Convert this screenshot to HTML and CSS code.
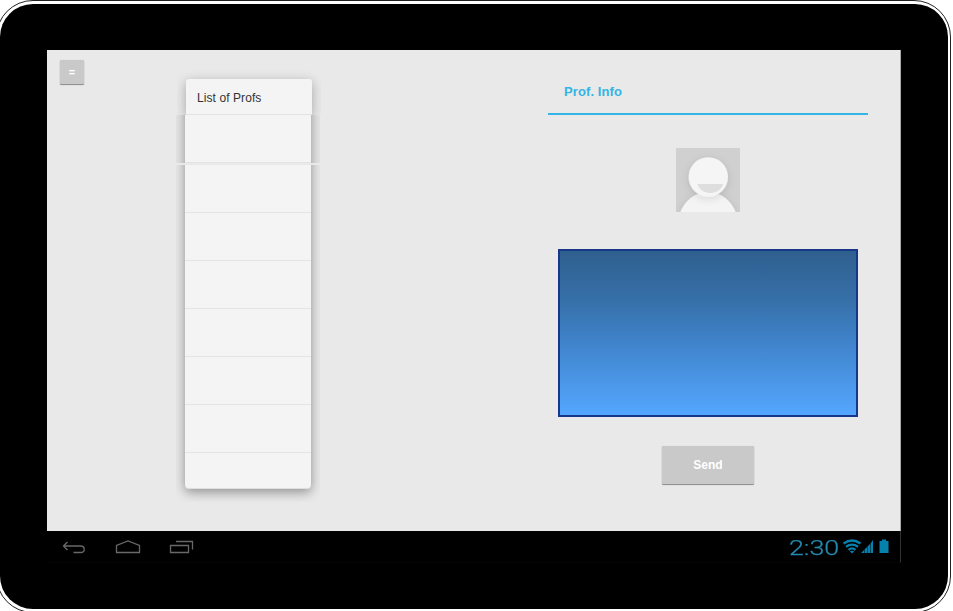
FILE: index.html
```html
<!DOCTYPE html>
<html lang="en">
<head>
<meta charset="utf-8">
<title>List of Profs</title>
<link rel="stylesheet" href="styles.css">
</head>
<body>
<div class="tablet">
  <div class="bezel">
    <main class="screen">
      <div class="menu-col"><button class="btn menu">=</button></div>
      <section class="list">
        <div class="card head">List of Profs</div>
        <div class="card first"><div class="row"></div></div>
        <div class="card rest">
          <div class="row"></div><div class="row"></div><div class="row"></div>
          <div class="row"></div><div class="row"></div><div class="row"></div>
        </div>
      </section>
      <section class="info">
        <h1>Prof. Info</h1>
        <svg class="avatar" width="64" height="64" viewBox="0 0 64 64">
          <defs>
            <filter id="soft" x="-30%" y="-30%" width="160%" height="160%"><feDropShadow dx="0" dy="2" stdDeviation="4" flood-opacity=".12"/></filter>
          </defs>
          <rect width="64" height="64" fill="#d0d0d0"/>
          <path d="M4 65C9 52 19 44 32 44s23 8 28 21z" fill="#f4f4f4" filter="url(#soft)"/>
          <circle cx="32.300" cy="29" r="19.700" fill="#f5f5f5" filter="url(#soft)"/>
          <path d="M21.500 36h25.500c-1 5-6.500 9-12.700 9s-11.800-4-12.800-9z" fill="#dedede"/>
        </svg>
        <div class="panel"></div>
        <button class="btn send">Send</button>
      </section>
    </main>
    <footer class="navbar">
      <svg class="nav" width="140" height="18" viewBox="0 0 140 18" fill="none" stroke="#686868" stroke-width="1.300">
        <path d="M4.500 3L.5 7l4 4M.5 7h17c5 0 5 6.500 0 6.500h-7"/>
        <path d="M53.500 13.500V6.500L65 2l11.500 4.500v7z"/>
        <path d="M107.500 6.500h18v7h-18zM113 2.500h16.500v8"/>
      </svg>
      <span class="clock"><span>2:30</span></span>
      <svg class="status" width="48" height="16" viewBox="0 0 48 16">
        <g fill="none" stroke="#0681ad" stroke-width="2.300">
          <path d="M.5 4.500Q9 -1.500 17.500 4.500M3 7.800Q9 3.500 15 7.800M5.500 10.800Q9 8 12.500 10.800"/>
        </g>
        <g fill="#0681ad">
          <path d="M6.800 12.300Q9 11 11.200 12.300L9 14.500z"/>
          <path d="M18 14l3-3v3zM21.500 10.500l2.500-2.500v6h-2.500zM24.500 7.500l2.500-2.500v9h-2.500zM27.500 4.500l2.500-3.500v13h-2.500z"/>
          <path d="M36.500 2h2.500V.500h4V2h2.500v12h-9z"/>
        </g>
      </svg>
    </footer>
  </div>
</div>
</body>
</html>
```
FILE: styles.css
```css
* { box-sizing: border-box; }
html, body { height: 100%; }
body {
  margin: 0;
  overflow: hidden;
  background: #fff;
  font-family: "Liberation Sans", Arial, sans-serif;
}
.tablet {
  width: 955px;
  height: 613px;
  margin-left: -4px;
  padding: 3px 2px 2px 3px;
  border: 1px solid #222;
  border-radius: 37px;
}
.bezel {
  width: 948px;
  height: 605px;
  padding: 46px 47px 46px;
  border-radius: 33px;
  background: #000;
}
.screen {
  display: flex;
  width: 854px;
  height: 481px;
  background: #e9e9e9;
  border-right: 1px solid #ababab;
}
.menu-col { width: 138px; padding: 10px 0 0 13px; }
.btn {
  display: block;
  padding: 0;
  border: 0;
  border-radius: 1px;
  background: #c9c9c9;
  color: #fff;
  font: bold 12px "Liberation Sans", Arial, sans-serif;
  box-shadow: 0 1px 1px #888, 0 0 1px #ccc;
}
.menu { width: 24px; height: 24px; font-size: 11px; }
.list { width: 363px; padding-top: 29px; }
.card {
  position: relative;
  width: 126px;
}
.card::before {
  content: "";
  position: absolute;
  z-index: -1;
  inset: 0;
  background: #f4f4f4;
  box-shadow: 0 3px 12px rgba(0, 0, 0, .4);
}
.head {
  height: 36px;
  margin-left: 1px;
  padding: 11px 0 0 11px;
  color: #333;
  font-size: 12px;
  line-height: 16px;
  letter-spacing: .08px;
  clip-path: inset(-12px -9px 0 -9px);
}
.head::before {
  border-radius: 3px 3px 0 0;
  border-bottom: 1px solid #e3e3e3;
  box-shadow: 0 3px 12px rgba(0, 0, 0, .3);
}
.first {
  height: 48px;
  margin-bottom: 2px;
  clip-path: inset(0 -9px);
}
.first::before { inset: -20px 0; }
.rest {
  height: 324px;
  clip-path: inset(0 -9px -13px);
}
.rest::before {
  top: -20px;
  border-radius: 0 0 4px 4px;
  border-bottom: 1px solid #dedede;
}
.row { height: 48px; border-bottom: 1px solid #e4e4e4; }
.info {
  display: flex;
  flex-direction: column;
  align-items: center;
  width: 320px;
  padding-top: 18px;
}
h1 {
  width: 320px;
  height: 47px;
  margin: 0 0 33px;
  padding: 16px 16px 0;
  border-bottom: 2px solid #33b5e5;
  color: #33b5e5;
  font-size: 13px;
  line-height: 16px;
  letter-spacing: .1px;
}
.avatar { display: block; }
.panel {
  width: 300px;
  height: 168px;
  margin: 37px 0 29px;
  border: 2px solid #193788;
  background: linear-gradient(#2f5f8f 0%, #3670a8 30%, #3d7fc4 50%, #54a6ff 100%);
}
.send { width: 92px; height: 38px; }
.navbar {
  display: flex;
  width: 854px;
  height: 32px;
  padding: 8px 9px 0 16px;
  border-right: 1px solid #333;
  border-bottom: 1px solid #050505;
}
.nav { margin-right: auto; }
.clock {
  width: 54px;
  color: #2489ae;
  font: 300 20px/18px Roboto, sans-serif;
  -webkit-text-stroke: .25px #2489ae;
}
.clock span { display: inline-block; transform: scaleX(1.340); transform-origin: 0 0; }
```
